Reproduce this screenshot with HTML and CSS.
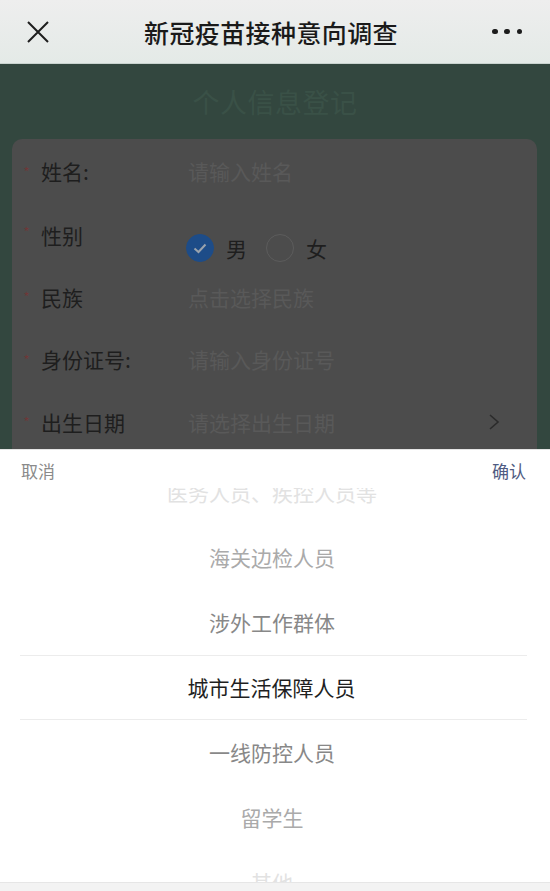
FILE: index.html
```html
<!DOCTYPE html>
<html lang="zh-CN">
  <head>
    <meta charset="UTF-8" />
    <meta name="viewport" content="width=device-width, initial-scale=1.0" />
    <title>新冠疫苗接种意向调查</title>
    <link rel="stylesheet" href="styles.css">
  </head>
  <body>
    <header class="navbar">
      <span class="nav-close">
        <svg width="24" height="24" viewBox="0 0 24 24">
          <path d="M2 2 L22 22 M22 2 L2 22" stroke="#1e1e1e" stroke-width="2" fill="none" />
        </svg>
      </span>
      <h1 class="nav-title">新冠疫苗接种意向调查</h1>
      <span class="nav-more">
        <i></i><i></i><i></i>
      </span>
    </header>

    <main class="page">
      <h2 class="page-title">个人信息登记</h2>
      <div class="card">
        <div class="row">
          <span class="star">*</span>
          <span class="label">姓名:</span>
          <span class="placeholder">请输入姓名</span>
        </div>
        <div class="row row-gender">
          <span class="star">*</span>
          <span class="label">性别</span>
          <div class="radios">
            <span class="radio checked">
              <svg width="16" height="16" viewBox="0 0 16 16">
                <path d="M2.5 8.5 L6.5 12 L13.5 4.5" stroke="#9aa3ad" stroke-width="2" fill="none" />
              </svg>
            </span>
            <span class="radio-text">男</span>
            <span class="radio"></span>
            <span class="radio-text">女</span>
          </div>
        </div>
        <div class="row">
          <span class="star">*</span>
          <span class="label">民族</span>
          <span class="placeholder">点击选择民族</span>
        </div>
        <div class="row">
          <span class="star">*</span>
          <span class="label">身份证号:</span>
          <span class="placeholder">请输入身份证号</span>
        </div>
        <div class="row">
          <span class="star">*</span>
          <span class="label">出生日期</span>
          <span class="placeholder">请选择出生日期</span>
          <span class="chevron">
            <svg width="12" height="18" viewBox="0 0 12 18">
              <path d="M2 2 L10 9 L2 16" stroke="#2b2b2b" stroke-width="1.6" fill="none" />
            </svg>
          </span>
        </div>
        <div class="row">
          <span class="star">*</span>
          <span class="label">人员类别</span>
          <span class="placeholder">请选择</span>
        </div>
      </div>
    </main>

    <section class="picker">
      <div class="picker-head">
        <span class="picker-cancel">取消</span>
        <span class="picker-ok">确认</span>
      </div>
      <div class="picker-body">
        <ul class="picker-list">
          <li class="far2">医务人员、疾控人员等</li>
          <li class="far1">海关边检人员</li>
          <li class="near">涉外工作群体</li>
          <li class="selected">城市生活保障人员</li>
          <li class="near">一线防控人员</li>
          <li class="far1">留学生</li>
          <li class="far2">其他</li>
        </ul>
      </div>
      <div class="picker-foot"></div>
    </section>
  </body>
</html>
```

FILE: styles.css
```css
html,
body {
  margin: 0;
  padding: 0;
}
body {
  width: 550px;
  height: 891px;
  overflow: hidden;
  font-family: "Noto Sans CJK SC", "Noto Sans", sans-serif;
  background: #fff;
}

.navbar {
  height: 64px;
  display: flex;
  align-items: center;
  padding: 0 18px 0 26px;
  box-sizing: border-box;
  background: linear-gradient(#eeeeee, #e4eae7);
  border-bottom: 1px solid #c9d3cf;
}
.nav-close {
  width: 24px;
  height: 24px;
  display: flex;
}
.nav-title {
  flex: 1;
  margin: 0;
  text-align: center;
  font-size: 25px;
  font-weight: 500;
  color: #1a1a1a;
  letter-spacing: 0.4px;
}
.nav-more {
  width: 30px;
  display: flex;
  justify-content: space-between;
  margin-right: 10px;
}
.nav-more i {
  width: 5.5px;
  height: 5.5px;
  border-radius: 50%;
  background: #1c1c1c;
}

.page {
  height: 385px;
  overflow: hidden;
  background: #33473f;
  padding-top: 1px;
  box-sizing: border-box;
}
.page-title {
  margin: 17px 0 0;
  height: 40px;
  text-align: center;
  font-size: 27px;
  font-weight: 400;
  color: #3a5147;
  letter-spacing: 0.5px;
}
.card {
  margin: 17px 13px 0 12px;
  background: #4c4c4c;
  border-radius: 10px;
  padding-top: 1px;
}
.row {
  display: flex;
  align-items: center;
  height: 62.5px;
  font-size: 21px;
}
.star {
  width: 29px;
  text-align: center;
  color: #6e3838;
  font-size: 13px;
  line-height: 1;
}
.label {
  width: 147px;
  color: #1e1e1e;
}
.placeholder {
  color: #595959;
}
.chevron {
  margin-left: auto;
  margin-right: 37px;
  display: flex;
}
.row-gender {
  align-items: flex-start;
  height: 63px;
  padding-top: 17px;
  box-sizing: border-box;
}
.row-gender .star {
  margin-top: 5px;
}
.radios {
  display: flex;
  align-items: center;
  margin-top: 13px;
  margin-left: -2px;
}
.radio {
  width: 28px;
  height: 28px;
  border-radius: 50%;
  border: 1.5px solid #5c5c5c;
  box-sizing: border-box;
  display: flex;
  align-items: center;
  justify-content: center;
}
.radio.checked {
  background: #1d4c88;
  border-color: #1d4c88;
}
.radio-text {
  color: #1e1e1e;
  margin: 0 19px 0 12px;
}

.picker {
  height: 442px;
  background: #fff;
  border-top: 1px solid #e4e4e4;
  display: flex;
  flex-direction: column;
  box-sizing: border-box;
}
.picker-head {
  height: 36px;
  display: flex;
  justify-content: space-between;
  align-items: center;
  padding: 2px 24px 0 21px;
  font-size: 17px;
  flex: none;
}
.picker-cancel {
  color: #8a8a8a;
}
.picker-ok {
  color: #4f5b82;
}
.picker-body {
  flex: 1;
  overflow: hidden;
}
.picker-list {
  list-style: none;
  margin: -28px 0 0;
  padding: 0;
}
.picker-list li {
  height: 65px;
  line-height: 65px;
  text-align: center;
  padding-right: 6px;
  font-size: 21px;
}
.picker-list .far2 {
  color: #e2e2e2;
}
.picker-list .far1 {
  color: #aaaaaa;
}
.picker-list .near {
  color: #888888;
}
.picker-list .selected {
  color: #1f1f1f;
  border-top: 1px solid #ececec;
  border-bottom: 1px solid #ececec;
  margin: 0 23px 0 20px;
  padding: 0 4px 0 0;
  line-height: 63px;
  height: 63px;
}
.picker-foot {
  height: 8px;
  flex: none;
  background: #f3f3f3;
  border-top: 1px solid #e6e6e6;
}
```
